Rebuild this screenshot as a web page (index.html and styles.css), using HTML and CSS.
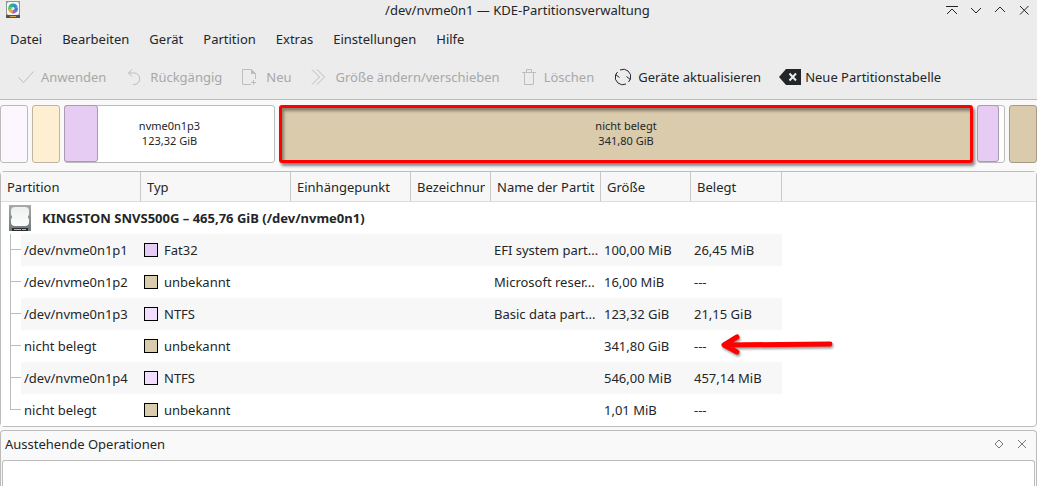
FILE: index.html
```html
<!DOCTYPE html>
<html lang="de">
<head>
<meta charset="utf-8">
<meta name="viewport" content="width=device-width, initial-scale=1">
<title>/dev/nvme0n1 — KDE-Partitionsverwaltung</title>
<link rel="stylesheet" href="styles.css">
</head>
<body>
<header class="chrome">
  <div class="titlebar">
    <svg class="app-icon" width="16" height="18" viewBox="0 0 16 18" aria-hidden="true">
      <rect x="1" y="0" width="14" height="17" fill="#8f9698"/>
      <rect x="1" y="14" width="14" height="3" fill="#4d5557"/>
      <rect x="5" y="15" width="6" height="1" fill="#d9a441"/>
      <rect x="2" y="1" width="12" height="13" rx="2" fill="#f4f7f8"/>
      <path d="M8 7.500L3.500 5.500A5 5 0 0 1 8 2.500Z" fill="#2fae83"/>
      <path d="M8 7.500V2.500A5 5 0 0 1 12.800 6.500Z" fill="#1d99d3"/>
      <path d="M8 7.500L12.800 6.500A5 5 0 0 1 10.500 11.800Z" fill="#5f6fd0"/>
      <path d="M8 7.500L10.500 11.800A5 5 0 0 1 7 12.400Z" fill="#9b59b6"/>
      <path d="M8 7.500L7 12.400A5 5 0 0 1 3.200 9Z" fill="#f6a623"/>
      <path d="M8 7.500L3.200 9A5 5 0 0 1 3.500 5.500Z" fill="#5cc267"/>
      <circle cx="8" cy="7.500" r="1.500" fill="#dff0f6"/>
    </svg>
    <h1 class="title">/dev/nvme0n1 — KDE-Partitionsverwaltung</h1>
    <div class="window-buttons">
      <button type="button" aria-label="Immer im Vordergrund"><svg width="12" height="12" viewBox="0 0 12 12"><path d="M0 2.500H12M1 10L6 5L11 10"/></svg></button>
      <button type="button" aria-label="Minimieren"><svg width="12" height="12" viewBox="0 0 12 12"><path d="M1 4L6 9L11 4"/></svg></button>
      <button type="button" aria-label="Maximieren"><svg width="12" height="12" viewBox="0 0 12 12"><path d="M1 8L6 3L11 8"/></svg></button>
      <button type="button" aria-label="Schließen"><svg width="12" height="12" viewBox="0 0 12 12"><path d="M2 2L10.500 10.500M10.500 2L2 10.500"/></svg></button>
    </div>
  </div>
  <nav class="menubar">
    <button type="button">Datei</button>
    <button type="button">Bearbeiten</button>
    <button type="button">Gerät</button>
    <button type="button">Partition</button>
    <button type="button">Extras</button>
    <button type="button">Einstellungen</button>
    <button type="button">Hilfe</button>
  </nav>
  <div class="toolbar" role="toolbar">
    <button type="button" disabled><svg width="22" height="22" viewBox="0 0 22 22"><path d="M3.500 11.500L8.500 16.500L18.500 5.500"/></svg>Anwenden</button>
    <button type="button" disabled><svg width="22" height="22" viewBox="0 0 22 22"><path d="M8 3.500L4.500 7L8 10.500M4.500 7H10A5.500 5.500 0 0 1 10 18.500H9"/></svg>Rückgängig</button>
    <button type="button" disabled><svg width="22" height="22" viewBox="0 0 22 22"><path d="M11 18.500H2.500V3.500H11.500L15.500 7.500V13M13.500 14V19M11 16.500H16"/><path class="solid" d="M11 3V8H16Z"/></svg>Neu</button>
    <button type="button" disabled><svg width="22" height="22" viewBox="0 0 22 22"><path d="M2 3.500L9.500 11L2 18.500M7 3.500L14.500 11L7 18.500"/></svg>Größe ändern/verschieben</button>
    <button type="button" disabled><svg width="22" height="22" viewBox="0 0 22 22"><path d="M4 6.500H18M8.500 6V3.500H13.500V6M6.500 7V18.500H15.500V7"/></svg>Löschen</button>
    <button type="button"><svg width="22" height="22" viewBox="0 0 22 22"><path d="M8 4A7.500 7.500 0 0 1 18.400 13M14.500 10.500L18.400 13.500M14 18A7.500 7.500 0 0 1 3.600 9M7.500 11.500L3.600 8.500M3.600 9L5.500 6M18.400 13L16.500 16"/></svg>Geräte aktualisieren</button>
    <button type="button"><svg width="22" height="22" viewBox="0 0 22 22"><path class="solid" d="M0 11L7 3H22V19H7Z"/><path class="cross" d="M10.500 7.500L17 14.500M17 7.500L10.500 14.500"/></svg>Neue Partitionstabelle</button>
  </div>
</header>

<main class="content">
  <section class="disk-map" aria-label="Partitionen">
    <div class="segment efi"></div>
    <div class="segment reserved"></div>
    <div class="segment data"><span class="used"></span><p>nvme0n1p3<br>123,32 GiB</p></div>
    <div class="segment free marked"><p>nicht belegt<br>341,80 GiB</p></div>
    <div class="segment recovery"><span class="used"></span></div>
    <div class="segment free"></div>
  </section>

  <section class="panel">
    <table class="partitions">
      <colgroup><col class="c-name"><col class="c-type"><col class="c-mount"><col class="c-label"><col class="c-part"><col class="c-size"><col class="c-used"><col></colgroup>
      <thead>
        <tr><th><span>Partition</span></th><th><span>Typ</span></th><th><span>Einhängepunkt</span></th><th><span>Bezeichnung</span></th><th><span>Name der Partition</span></th><th><span>Größe</span></th><th><span>Belegt</span></th><td></td></tr>
      </thead>
      <tbody>
        <tr class="device"><th colspan="8"><div class="device-name">
          <svg width="22" height="26" viewBox="0 0 22 26" aria-hidden="true">
            <defs><linearGradient id="case" x2="0" y2="1"><stop stop-color="#a9abad"/><stop offset="1" stop-color="#6d7777"/></linearGradient><linearGradient id="plate" x2="0" y2="1"><stop stop-color="#eef0f0"/><stop offset="1" stop-color="#fcfcfc"/></linearGradient></defs>
            <rect width="22" height="26" fill="url(#case)"/>
            <rect x="3" y="23" width="16" height="3" fill="#2f2f33"/>
            <path d="M5 24.500H12M13 24.500H17" stroke="#e8b34f"/>
            <path d="M6 2H16Q20 2 20 6V10L19 11V13L20 14V17Q20 21 16 21H6Q2 21 2 17V14L3 13V11L2 10V6Q2 2 6 2Z" fill="url(#plate)"/>
          </svg>KINGSTON SNVS500G – 465,76 GiB (/dev/nvme0n1)</div></th></tr>
        <tr class="alt"><td class="node">/dev/nvme0n1p1</td><td><i class="swatch fat"></i>Fat32</td><td></td><td></td><td>EFI system part...</td><td>100,00 MiB</td><td>26,45 MiB</td><td></td></tr>
        <tr><td class="node">/dev/nvme0n1p2</td><td><i class="swatch unknown"></i>unbekannt</td><td></td><td></td><td>Microsoft reser...</td><td>16,00 MiB</td><td>---</td><td></td></tr>
        <tr class="alt"><td class="node">/dev/nvme0n1p3</td><td><i class="swatch ntfs"></i>NTFS</td><td></td><td></td><td>Basic data part...</td><td>123,32 GiB</td><td>21,15 GiB</td><td></td></tr>
        <tr><td class="node">nicht belegt</td><td><i class="swatch unknown"></i>unbekannt</td><td></td><td></td><td></td><td>341,80 GiB</td><td class="pointed">---<svg class="arrow" width="114" height="26" viewBox="0 0 114 26" aria-hidden="true"><path d="M110 12L5 13M17 5L4 13L17 20"/></svg></td><td></td></tr>
        <tr class="alt"><td class="node">/dev/nvme0n1p4</td><td><i class="swatch ntfs"></i>NTFS</td><td></td><td></td><td></td><td>546,00 MiB</td><td>457,14 MiB</td><td></td></tr>
        <tr><td class="node last">nicht belegt</td><td><i class="swatch unknown"></i>unbekannt</td><td></td><td></td><td></td><td>1,01 MiB</td><td>---</td><td></td></tr>
      </tbody>
    </table>
  </section>

  <section class="panel operations">
    <header class="operations-head">
      <h2>Ausstehende Operationen</h2>
      <button type="button" aria-label="Abdocken"><svg width="12" height="12" viewBox="0 0 12 12"><path d="M6 2L10 6L6 10L2 6Z"/></svg></button>
      <button type="button" aria-label="Schließen"><svg width="12" height="12" viewBox="0 0 12 12"><path d="M2 2L10 10M10 2L2 10"/></svg></button>
    </header>
    <div class="operations-list"></div>
  </section>
</main>
</body>
</html>
```
FILE: styles.css
```css
* { box-sizing: border-box; }

body {
  margin: 0;
  height: 100vh;
  display: flex;
  flex-direction: column;
  overflow: hidden;
  background: #f9f9f9;
  color: #232629;
  font: 13px/20px "Noto Sans", sans-serif;
}

h1, h2, p { margin: 0; font: inherit; }

button {
  display: flex;
  align-items: center;
  padding: 0;
  border: 0;
  background: none;
  color: inherit;
  font: inherit;
  white-space: nowrap;
}

button svg { flex: none; fill: none; stroke: currentColor; }
button .solid { fill: currentColor; stroke: none; }
button .cross { stroke: #ececec; stroke-width: 2; }

.chrome { background: #ececec; border-bottom: 1px solid #b9b9b9; }

.titlebar {
  display: grid;
  grid-template-columns: 1fr auto 1fr;
  align-items: center;
  height: 20px;
  padding: 0 7px 0 5px;
}
.window-buttons { display: flex; justify-content: flex-end; gap: 12px; }

.menubar {
  display: flex;
  gap: 20px;
  height: 38px;
  padding: 0 10px;
}

.toolbar {
  display: flex;
  gap: 18px;
  height: 41px;
  padding: 0 15px 4px;
}
.toolbar button { gap: 4px; }
.toolbar button:disabled { color: #a7a8a9; }
.toolbar button:disabled svg { color: #bcbdbd; }

.content {
  flex: 1;
  display: flex;
  flex-direction: column;
  gap: 3px;
}

.disk-map {
  display: grid;
  grid-template-columns: 28px 28px 211px 1fr 28px 28px;
  gap: 4px;
  height: 58px;
  margin: 5px 0;
}
.segment {
  display: flex;
  position: relative;
  align-items: center;
  justify-content: center;
  border: 1px solid #bbb;
  border-radius: 3px;
  background: #fff;
  text-align: center;
  font-size: 11px;
  line-height: 15px;
}
.segment p { padding-bottom: 2px; }
.segment .used {
  position: absolute;
  inset: -1px auto 0 -1px;
  width: 34px;
  border: 1px solid #a99bb0;
  border-radius: 3px;
  background: #e6cbf3;
}
.recovery .used { width: 22px; }
.efi { background: #fcf7ff; }
.reserved { background: #ffefd2; border-color: #bfb49f; }
.free { background: #dacbac; border-color: #a69b84; }
.marked {
  border: 3px solid #f00;
  box-shadow: 2px 3px 3px #888, inset 2px 3px 3px #887f6c;
}

.panel {
  border: 1px solid #bcbcbc;
  border-radius: 4px;
  background: #fff;
}

.partitions {
  width: 100%;
  table-layout: fixed;
  border-collapse: separate;
  border-spacing: 0;
}
.c-name { width: 140px; }
.c-type { width: 150px; }
.c-mount { width: 120px; }
.c-label { width: 80px; }
.c-part { width: 110px; }
.c-size { width: 90px; }
.c-used { width: 91px; }

thead tr { height: 30px; }
thead th, thead td {
  padding: 0 5px 0 6px;
  border-bottom: 1px solid #dedede;
  background: #f7f7f7;
  font-weight: 400;
  text-align: left;
}
thead th { border-right: 1px solid #c9c9c9; }
thead span { display: block; overflow: hidden; white-space: nowrap; }

tbody tr { height: 32px; }
tbody td {
  padding: 0 0 0 3px;
  overflow: hidden;
  white-space: nowrap;
}
tbody th { padding: 0 8px; text-align: left; }
.alt td:not(:last-child) { background-color: #f7f7f7; }
.device-name { display: flex; align-items: center; gap: 11px; }

.partitions .node {
  padding-left: 23px;
  background-image:
    linear-gradient(#bcbcbc, #bcbcbc),
    linear-gradient(#bcbcbc, #bcbcbc),
    linear-gradient(#fff, #fff);
  background-position: 9px 0, 9px 15px, 0 0;
  background-size: 1px 100%, 11px 1px, 20px 100%;
  background-repeat: no-repeat;
}
.partitions .last { background-size: 1px 16px, 11px 1px, 20px 100%; }

.swatch {
  display: inline-block;
  width: 14px;
  height: 14px;
  margin-right: 6px;
  border: 1px solid #000;
  vertical-align: -2px;
}
.fat { background: #e6cbf3; }
.ntfs { background: #f2dcff; }
.unknown { background: #dacbac; }

.partitions .pointed { position: relative; overflow: visible; }
.arrow {
  position: absolute;
  left: 29px;
  top: 2px;
  fill: none;
  stroke: #f00;
  stroke-width: 5;
  stroke-linecap: round;
  stroke-linejoin: round;
  filter: drop-shadow(1px 2px 1px #999);
}

.operations {
  flex: 1;
  display: flex;
  flex-direction: column;
  border-bottom: 0;
  border-radius: 4px 4px 0 0;
  background: #f9f9f9;
}
.operations-head {
  display: flex;
  align-items: center;
  gap: 11px;
  height: 29px;
  padding: 0 8px 4px 4px;
}
.operations-head h2 { flex: 1; }
.operations-head button { color: #777; }
.operations-list {
  flex: 1;
  margin: 0 1px;
  border: 1px solid #bcbcbc;
  border-bottom: 0;
  border-radius: 3px 3px 0 0;
  background: #fff;
}
```
